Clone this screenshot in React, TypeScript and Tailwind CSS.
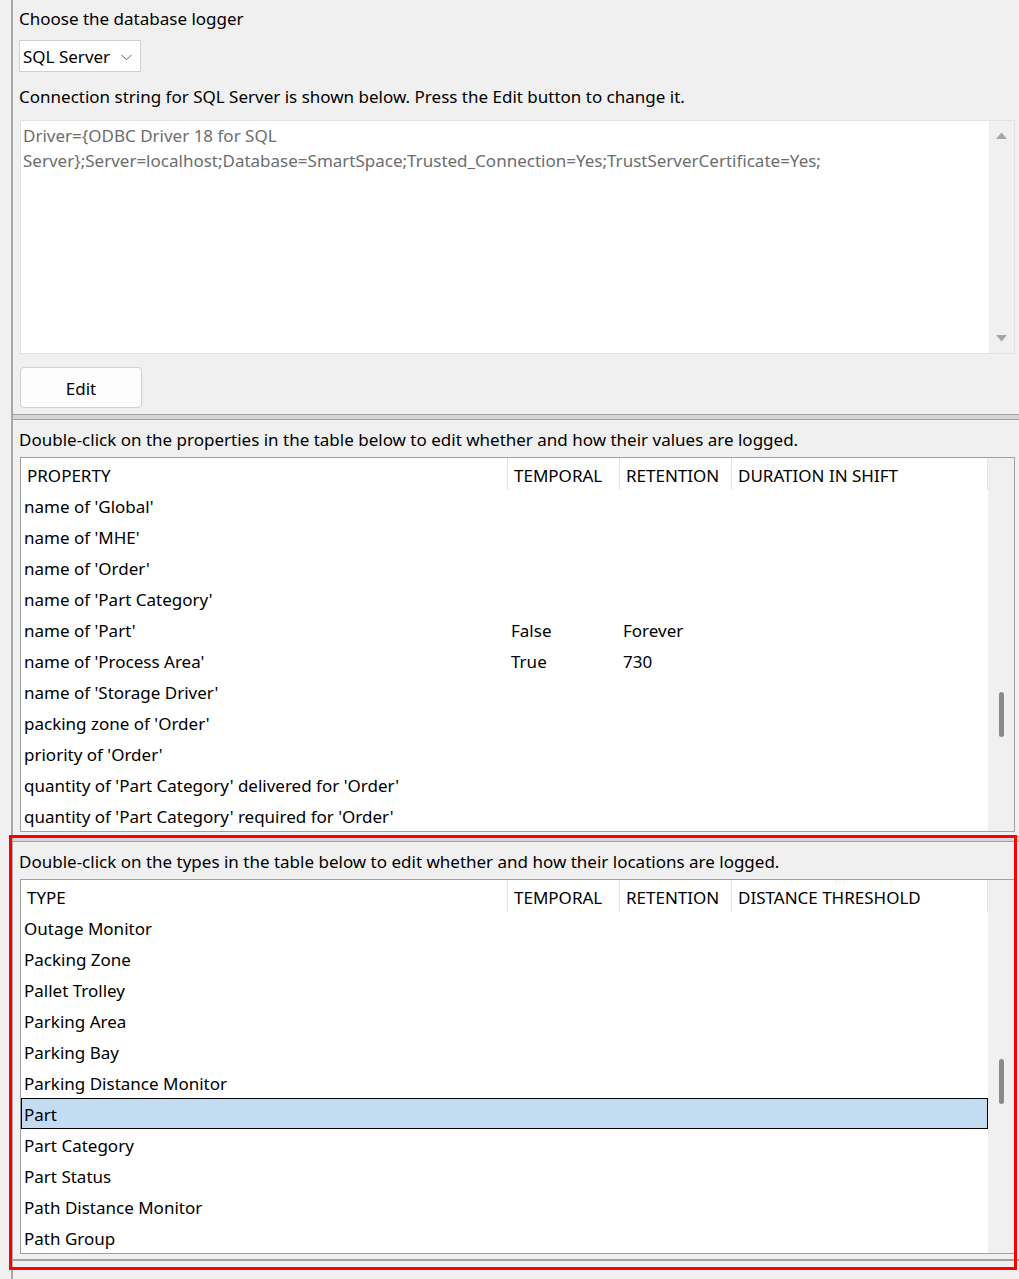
import React from 'react';

const font = { fontFamily: '"Noto Sans", "Open Sans", sans-serif' };

type Row = { name: string; temporal?: string; retention?: string; selected?: boolean };

const propertyRows: Row[] = [
  { name: "name of 'Global'" },
  { name: "name of 'MHE'" },
  { name: "name of 'Order'" },
  { name: "name of 'Part Category'" },
  { name: "name of 'Part'", temporal: 'False', retention: 'Forever' },
  { name: "name of 'Process Area'", temporal: 'True', retention: '730' },
  { name: "name of 'Storage Driver'" },
  { name: "packing zone of 'Order'" },
  { name: "priority of 'Order'" },
  { name: "quantity of 'Part Category' delivered for 'Order'" },
  { name: "quantity of 'Part Category' required for 'Order'" },
];

const typeRows: Row[] = [
  { name: 'Outage Monitor' },
  { name: 'Packing Zone' },
  { name: 'Pallet Trolley' },
  { name: 'Parking Area' },
  { name: 'Parking Bay' },
  { name: 'Parking Distance Monitor' },
  { name: 'Part', selected: true },
  { name: 'Part Category' },
  { name: 'Part Status' },
  { name: 'Path Distance Monitor' },
  { name: 'Path Group' },
];

function Splitter() {
  return <div className="h-[6px] border-y border-[#a0a0a0] bg-[#d6d6d6]" />;
}

function Table({
  first,
  last,
  rows,
  thumbTop,
}: {
  first: string;
  last: string;
  rows: Row[];
  thumbTop: string;
}) {
  return (
    <div className="flex h-[375px] w-[995px] border border-[#a0a0a0] bg-white">
      <div className="w-[967px] flex flex-col">
        <div className="flex h-[32px] shrink-0">
          <div className="w-[487px] border-r border-[#e5e5e5] pl-[6px] pt-[3px] flex items-center">{first}</div>
          <div className="w-[112px] border-r border-[#e5e5e5] pl-[6px] pt-[3px] flex items-center">TEMPORAL</div>
          <div className="w-[112px] border-r border-[#e5e5e5] pl-[6px] pt-[3px] flex items-center">RETENTION</div>
          <div className="w-[256px] border-r border-[#e5e5e5] pl-[6px] pt-[3px] flex items-center">{last}</div>
        </div>
        {rows.map((r) => (
          <div
            key={r.name}
            className={`flex h-[31px] shrink-0 items-center pt-[2px] ${
              r.selected ? 'bg-[#c3dcf1] border border-black' : 'border border-transparent'
            }`}
          >
            <div className="w-[486px] pl-[2px] whitespace-nowrap">{r.name}</div>
            <div className="w-[112px] pl-[3px]">{r.temporal}</div>
            <div className="w-[112px] pl-[3px]">{r.retention}</div>
          </div>
        ))}
      </div>
      <div className="w-[26px] bg-[#f0f0f0] flex flex-col items-center">
        <div className={`${thumbTop} ml-[1px] h-[45px] w-[5px] rounded-full bg-[#8b8b8b]`} />
      </div>
    </div>
  );
}

export default function App() {
  return (
    <div className="relative min-h-[1279px] w-[1019px] overflow-hidden bg-[#f0f0f0] text-[17px] text-black" style={font}>
      <div className="flex">
        <div className="w-[11px] shrink-0" />
        <div className="flex-1 border-l-2 border-[#a8a8a8] min-h-[1279px]">
          {/* database logger */}
          <div className="pl-[6px]">
            <div className="flex h-[36px] items-center pt-[1px]">Choose the database logger</div>
            <div className="mt-[4px] flex h-[32px] w-[122px] items-center justify-between border border-[#d0d0d0] bg-white pl-[3px] pr-[8px] pt-[2px]">
              <span>SQL Server</span>
              <svg width="11" height="7" viewBox="0 0 11 7" fill="none">
                <path d="M0.5 0.8 L5.5 5.8 L10.5 0.8" stroke="#606060" strokeWidth="1" />
              </svg>
            </div>
            <div className="flex h-[48px] items-center pt-[2px]">
              Connection string for SQL Server is shown below. Press the Edit button to change it.
            </div>
            <div className="ml-[1px] flex h-[234px] w-[995px] border border-[#e3e3e3] bg-white">
              <div className="flex-1 pl-[2px] pt-[2px] leading-[25px] text-[#6d6d6d]">
                <div>Driver={'{'}ODBC Driver 18 for SQL</div>
                <div>Server{'}'};Server=localhost;Database=SmartSpace;Trusted_Connection=Yes;TrustServerCertificate=Yes;</div>
              </div>
              <div className="flex w-[25px] flex-col items-center justify-between bg-[#f0f0f0] py-[11px]">
                <svg width="11" height="7" viewBox="0 0 11 7">
                  <path d="M0 7 L5.5 0.5 L11 7 Z" fill="#a6a6a6" />
                </svg>
                <svg width="11" height="7" viewBox="0 0 11 7">
                  <path d="M0 0 L5.5 6.5 L11 0 Z" fill="#a6a6a6" />
                </svg>
              </div>
            </div>
            <button className="ml-[1px] mt-[13px] flex h-[41px] w-[122px] items-center justify-center rounded-[4px] border border-[#d0d0d0] bg-[#fdfdfd] pt-[2px]">
              Edit
            </button>
          </div>
          <div className="mt-[6px]">
            <Splitter />
          </div>

          {/* properties */}
          <div className="pl-[6px]">
            <div className="flex h-[37px] items-center pt-[2px]">
              Double-click on the properties in the table below to edit whether and how their values are logged.
            </div>
            <div className="ml-[1px]">
              <Table first="PROPERTY" last="DURATION IN SHIFT" rows={propertyRows} thumbTop="mt-[234px]" />
            </div>
          </div>
          <div className="mt-[4px]">
            <Splitter />
          </div>

          {/* types */}
          <div className="pl-[6px]">
            <div className="flex h-[37px] items-center pt-[2px]">
              Double-click on the types in the table below to edit whether and how their locations are logged.
            </div>
            <div className="ml-[1px]">
              <Table first="TYPE" last="DISTANCE THRESHOLD" rows={typeRows} thumbTop="mt-[179px]" />
            </div>
          </div>
          <div className="mt-[5px] border-b-2 border-[#a0a0a0]" />
        </div>
      </div>

      {/* annotation */}
      <div className="pointer-events-none absolute left-[9px] top-[835px] h-[435px] w-[1008px] border-[3px] border-[#ff0000]" />
    </div>
  );
}
